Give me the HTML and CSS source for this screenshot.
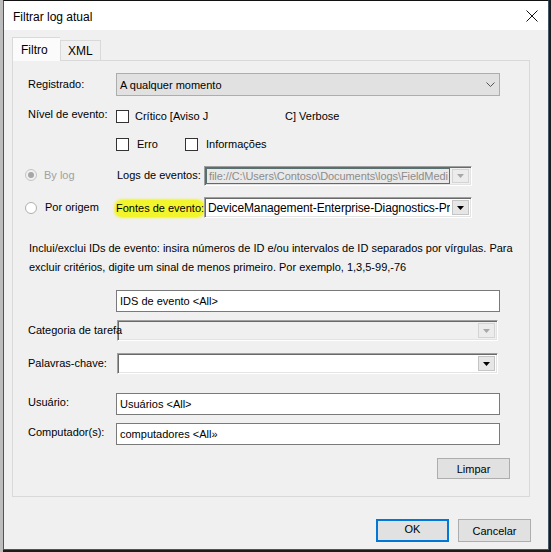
FILE: index.html
```html
<!DOCTYPE html>
<html lang="pt">
<head>
<meta charset="utf-8">
<title>Filtrar log atual</title>
<link rel="stylesheet" href="styles.css">
</head>
<body>
<div class="screen">
  <div class="window">
    <div class="titlebar">
      <span class="title">Filtrar log atual</span>
      <svg class="close" width="12" height="12" viewBox="0 0 12 12"><path d="M0.5 0.5 L11.5 11.5 M11.5 0.5 L0.5 11.5" stroke="#111" stroke-width="1" fill="none"/></svg>
    </div>
    <div class="client">
      <div class="tabs">
        <div class="tab active">Filtro</div>
        <div class="tab">XML</div>
      </div>
      <div class="panel">
        <div class="row r1">
          <span class="label">Registrado:</span>
          <div class="combo">
            <span class="combo-text">A qualquer momento</span>
            <svg class="chev" width="9" height="5" viewBox="0 0 9 5"><path d="M0.5 0.5 L4.5 4.5 L8.5 0.5" stroke="#555" stroke-width="1" fill="none"/></svg>
          </div>
        </div>
        <div class="row r2">
          <span class="label">Nível de evento:</span>
          <span class="check"></span>
          <span class="ctext w-critico">Crítico [Aviso J</span>
          <span class="ctext">C] Verbose</span>
        </div>
        <div class="row r3">
          <span class="check"></span>
          <span class="ctext w-erro">Erro</span>
          <span class="check"></span>
          <span class="ctext">Informações</span>
        </div>
        <div class="row r4">
          <span class="radio checked"><span class="dot"></span></span>
          <span class="rtext disabled">By log</span>
          <span class="flabel">Logs de eventos:</span>
          <div class="cbx">
            <span class="cbx-text logs">file://C:\Users\Contoso\Documents\logs\FieldMedi</span>
            <span class="cbx-btn off"><svg width="7" height="4" viewBox="0 0 7 4"><path d="M0 0 H7 L3.5 4 Z" fill="#a8a8a8"/></svg></span>
          </div>
        </div>
        <div class="row r5">
          <span class="radio"></span>
          <span class="rtext r-origem">Por origem</span>
          <span class="flabel"><span class="hl">Fontes de evento:</span></span>
          <div class="cbx white">
            <span class="cbx-text src">DeviceManagement-Enterprise-Diagnostics-Pr</span>
            <span class="cbx-btn"><svg width="7" height="4" viewBox="0 0 7 4"><path d="M0 0 H7 L3.5 4 Z" fill="#000"/></svg></span>
          </div>
        </div>
        <p class="help">Inclui/exclui IDs de evento: insira números de ID e/ou intervalos de ID separados por vírgulas. Para<br>excluir critérios, digite um sinal de menos primeiro. Por exemplo, 1,3,5-99,-76</p>
        <div class="row r7">
          <div class="edit">IDS de evento &lt;All&gt;</div>
        </div>
        <div class="row r8">
          <span class="label over">Categoria de tarefa</span>
          <div class="cbx wide">
            <span class="cbx-text"></span>
            <span class="cbx-btn off"><svg width="7" height="4" viewBox="0 0 7 4"><path d="M0 0 H7 L3.5 4 Z" fill="#a8a8a8"/></svg></span>
          </div>
        </div>
        <div class="row r9">
          <span class="label">Palavras-chave:</span>
          <div class="cbx wide white">
            <span class="cbx-text"></span>
            <span class="cbx-btn"><svg width="7" height="4" viewBox="0 0 7 4"><path d="M0 0 H7 L3.5 4 Z" fill="#000"/></svg></span>
          </div>
        </div>
        <div class="row r10">
          <span class="label">Usuário:</span>
          <div class="edit">Usuários &lt;All&gt;</div>
        </div>
        <div class="row r11">
          <span class="label">Computador(s):</span>
          <div class="edit">computadores &lt;All»</div>
        </div>
        <div class="row r12">
          <button class="btn">Limpar</button>
        </div>
      </div>
      <div class="footer">
        <button class="btn big default">OK</button>
        <button class="btn big">Cancelar</button>
      </div>
    </div>
  </div>
</div>
</body>
</html>
```
FILE: styles.css
```css
* { box-sizing: border-box; }
html, body { margin: 0; padding: 0; }
body {
  font-family: "Liberation Sans", Arial, sans-serif;
  font-size: 11px;
  color: #000;
  background: #1c1c1c;
}
.screen {
  width: 551px;
  height: 552px;
  background: linear-gradient(to right, #bdbdbd 0, #bdbdbd 3px, #1c1c1c 3px);
  overflow: hidden;
}
.window {
  margin-left: 3px;
  width: 546px;
  height: 550px;
  border: 1px solid #45566b;
  border-top-color: #111;
  background: #f0f0f0;
}
.titlebar {
  height: 29px;
  background: #fff;
  display: flex;
  align-items: center;
  justify-content: space-between;
  padding: 0 10px 0 9px;
}
.title { font-size: 12px; padding-top: 2px; }
.close { margin-top: 1px; }
.client { padding: 7px 0 0 8px; }
.tabs {
  display: flex;
  align-items: flex-end;
  height: 23px;
  position: relative;
  z-index: 1;
}
.tab {
  height: 20px;
  padding: 0 8px;
  border: 1px solid #d9d9d9;
  border-bottom: none;
  background: #f0f0f0;
  display: flex;
  align-items: center;
  font-size: 12px;
}
.tab.active {
  height: 24px;
  margin-bottom: -1px;
  width: 48px;
  background: #fbfbfb;
  border-right: none;
  padding-top: 1px;
}
.tab:not(.active) { width: 41px; padding-left: 7px; }
.panel {
  width: 518px;
  border: 1px solid #d9d9d9;
  padding: 12px 0 17px 0;
}
.row { display: flex; align-items: center; }
.label { width: 88px; flex: none; white-space: nowrap; padding-bottom: 2px; }
.r10 .label, .r11 .label { padding-bottom: 5px; }
.r1, .r2, .r8, .r9, .r10, .r11 { padding-left: 15px; }
.r1 { height: 23px; }
.combo {
  width: 384px;
  height: 23px;
  border: 1px solid #adadad;
  background: #e1e1e1;
  display: flex;
  align-items: center;
  justify-content: space-between;
  padding: 0 4px 0 3px;
}
.r2 { margin-top: 10px; height: 20px; }
.r2 .label { padding-bottom: 4px; }
.check {
  width: 13px; height: 13px;
  border: 1px solid #333;
  background: #fff;
  flex: none;
}
.ctext { margin-left: 6px; white-space: nowrap; }
.w-critico { width: 144px; }
.r3 { margin-top: 8px; height: 20px; padding-left: 103px; }
.r3 .ctext { margin-left: 8px; }
.w-erro { width: 48px; }
.r4 { margin-top: 12px; height: 20px; padding-left: 12px; }
.r5 { margin-top: 11px; height: 21px; padding-left: 12px; }
.r4 .rtext, .r4 .flabel { padding-bottom: 3px; }
.r5 .rtext { padding-bottom: 1px; }
.radio {
  width: 12px; height: 12px;
  border: 1px solid #b0b0b0;
  border-radius: 50%;
  background: #fff;
  flex: none;
  display: flex; align-items: center; justify-content: center;
}
.radio.checked { background: #f0f0f0; border-color: #c4c4c4; margin-bottom: 2px; }
.dot { width: 6px; height: 6px; border-radius: 50%; background: #a6a6a6; }
.rtext { margin-left: 7px; width: 73px; white-space: nowrap; }
.r-origem { margin-left: 8px; width: 72px; }
.disabled { color: #a0a0a0; }
.flabel { width: 87px; white-space: nowrap; }
.hl {
  background: #f2f52c;
  border-radius: 7px / 6px;
  box-shadow: 0 0 2px 1px rgba(242,245,44,0.85);
  padding: 2px 0 3px 1px;
  margin-left: -2px;
}
.cbx {
  width: 268px;
  height: 100%;
  border: 1px solid;
  border-color: #a0a0a0 #fff #fff #a0a0a0;
  box-shadow: inset 1px 1px 0 #696969, inset -1px -1px 0 #e3e3e3;
  display: flex;
  align-items: stretch;
  padding: 2px 2px 2px 2px;
  background: #f0f0f0;
}
.cbx.white { background: #fff; }
.cbx.wide { width: 381px; height: 21px; }
.cbx-text {
  flex: 1;
  overflow: hidden;
  white-space: nowrap;
  display: flex;
  align-items: center;
  min-width: 0;
}
.cbx-text.logs {
  background: #e9e9e9;
  border: 1px solid #56706f;
  color: #8c8c8c;
  letter-spacing: -0.08px;
  padding-left: 2px;
  margin: -1px 0 -1px -1px;
}
.cbx-text.src { font-size: 12px; padding-left: 1px; letter-spacing: -0.12px; }
.cbx-btn {
  width: 17px;
  flex: none;
  margin-left: 2px;
  background: #e6e6e6;
  border: 1px solid #c4c4c4;
  display: flex;
  align-items: center;
  justify-content: center;
}
.cbx-btn.off { background: #ececec; border-color: #d4d4d4; }
.help {
  margin: 21px 0 0 16px;
  line-height: 19px;
  white-space: nowrap;
}
.r7 { margin-top: 13px; padding-left: 103px; }
.edit {
  width: 384px;
  height: 22px;
  border: 1px solid #7a7a7a;
  background: #fff;
  display: flex;
  align-items: center;
  padding-left: 3px;
}
.r8 { margin-top: 8px; }
.r8 .label { width: 89px; position: relative; z-index: 1; }
.r9 { margin-top: 12px; }
.r9 .label { width: 89px; }
.r10 { margin-top: 19px; }
.r11 { margin-top: 8px; }
.r12 { margin-top: 13px; justify-content: flex-end; padding-right: 19px; }
.btn {
  width: 73px;
  height: 21px;
  border: 1px solid #adadad;
  background: #e1e1e1;
  font: inherit;
  color: #000;
  padding: 0;
}
.footer {
  display: flex;
  justify-content: flex-end;
  gap: 9px;
  margin-top: 22px;
  padding-right: 17px;
}
.btn.big { height: 23px; }
.btn.default { border: 2px solid #0078d7; padding-bottom: 3px; }
```
